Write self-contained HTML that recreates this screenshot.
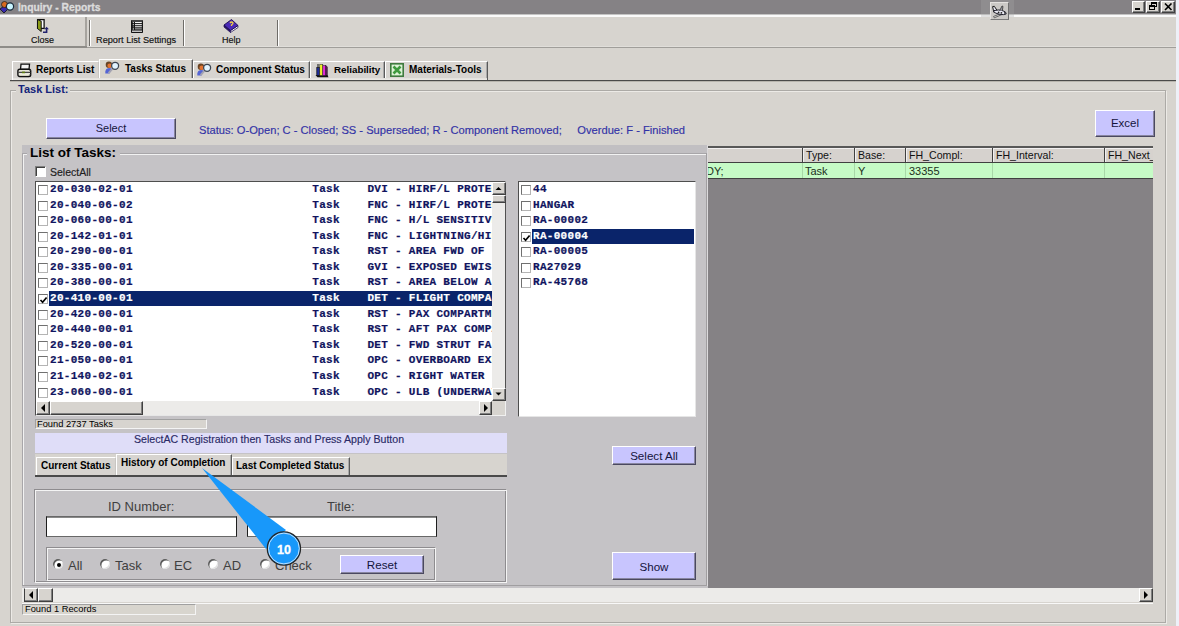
<!DOCTYPE html>
<html><head><meta charset="utf-8">
<style>
*{box-sizing:border-box;margin:0;padding:0}
html,body{width:1179px;height:626px;overflow:hidden;background:#D7D4CF;font-family:"Liberation Sans",sans-serif;position:relative}
.a{position:absolute}
.t{position:absolute;white-space:pre;line-height:1;-webkit-text-stroke:0.15px currentColor}
.mono{font-family:"Liberation Mono",monospace;font-weight:bold}
.raised{border-top:1px solid #fff;border-left:1px solid #fff;border-right:1px solid #404040;border-bottom:1px solid #404040;box-shadow:inset -1px -1px 0 #808080}
.sunk{border-top:1px solid #808080;border-left:1px solid #808080;border-right:1px solid #fff;border-bottom:1px solid #fff;box-shadow:inset 1px 1px 0 #404040}
.btn{position:absolute;background:#C8C5FE;border-top:1px solid #fff;border-left:1px solid #fff;border-right:1px solid #4A4860;border-bottom:1px solid #4A4860;box-shadow:inset -1px -1px 0 #8886A0;color:#14143C;text-align:center;white-space:pre}
.cb{position:absolute;width:10px;height:10px;background:#fff;border-top:1px solid #707070;border-left:1px solid #707070;border-right:1px solid #B4B4B4;border-bottom:1px solid #B4B4B4}
.tab{position:absolute;background:#D7D4D0;border-top:1px solid #fff;border-left:1px solid #fff;border-right:1px solid #5A5A5A;box-shadow:inset -1px 0 0 #A8A8A8;font-weight:bold;font-size:10px;white-space:pre}
.track{position:absolute;background:#ECEBE9}
.sbtn{position:absolute;background:#D7D4CF;border-top:1px solid #fff;border-left:1px solid #fff;border-right:1px solid #404040;border-bottom:1px solid #404040;box-shadow:inset -1px -1px 0 #808080}
.row{position:absolute;height:15px;white-space:pre;font-size:11px;letter-spacing:0.3px;line-height:15px;color:#10145E;-webkit-text-stroke:0.2px currentColor}
.sel{background:#0A246A;color:#fff}
.radio{position:absolute;width:10px;height:10px;border-radius:50%;background:#fff;box-shadow:inset 1.4px 1.4px 0 #5A5A5A, inset -1px -1px 0 #E0E0E0}
</style></head><body>

<!-- right light strip -->
<div class="a" style="left:1176px;top:0;width:3px;height:626px;background:#EEF0F8"></div>

<!-- title bar -->
<div class="a" style="left:0;top:0;width:1176px;height:14px;background:#858285"></div>
<svg class="a" style="left:0;top:0" width="16" height="14" viewBox="0 0 16 14">
  <path d="M0 9 L4 6 L8 9 L4 13 Z" fill="#3A2AB0" stroke="#111" stroke-width="0.8"/>
  <circle cx="4.5" cy="4.5" r="3" fill="#D86A20" stroke="#222" stroke-width="0.8"/>
  <circle cx="10" cy="6.5" r="3.6" fill="#C8F4FF" stroke="#1A2A3A" stroke-width="1.2"/>
</svg>
<div class="t" style="left:18px;top:3px;font-size:10.3px;font-weight:bold;color:#DCDCDC;-webkit-text-stroke:0.3px #DCDCDC">Inquiry - Reports</div>

<!-- window buttons -->
<div class="a raised" style="left:1132px;top:1px;width:13px;height:12px;background:#D7D4CF"></div>
<div class="a" style="left:1135px;top:8px;width:5px;height:2px;background:#000"></div>
<div class="a raised" style="left:1146px;top:1px;width:14px;height:12px;background:#D7D4CF"></div>
<svg class="a" style="left:1148px;top:2px" width="10" height="9" viewBox="0 0 10 9">
  <rect x="3.5" y="0.5" width="5" height="4" fill="none" stroke="#000"/><rect x="3" y="0" width="6" height="2" fill="#000"/>
  <rect x="1.5" y="3.5" width="5" height="4" fill="#D7D4CF" stroke="#000"/><rect x="1" y="3" width="6" height="2" fill="#000"/>
</svg>
<div class="a raised" style="left:1161px;top:1px;width:14px;height:12px;background:#D7D4CF"></div>
<svg class="a" style="left:1164px;top:3px" width="9" height="8" viewBox="0 0 9 8">
  <path d="M1 0.5 L7.5 7 M7.5 0.5 L1 7" stroke="#000" stroke-width="1.6"/>
</svg>

<!-- toolbar -->
<div class="a" style="left:0;top:14px;width:1176px;height:1px;background:#C4C4C4"></div>
<div class="a" style="left:0;top:15px;width:1176px;height:2px;background:#FAFAFA"></div>
<div class="a" style="left:0;top:46px;width:1176px;height:1px;background:#E0DEDA"></div>
<div class="a" style="left:0;top:47px;width:1176px;height:1px;background:#A09E9A"></div>
<div class="a" style="left:85px;top:17px;width:2px;height:30px;background:#A6A39E"></div>
<div class="a" style="left:0;top:46px;width:87px;height:2px;background:#8E8C88"></div>
<div class="a" style="left:89px;top:20px;width:1px;height:26px;background:#6E6C68"></div>
<div class="a" style="left:90px;top:20px;width:1px;height:26px;background:#fff"></div>
<div class="a" style="left:183px;top:20px;width:1px;height:26px;background:#6E6C68"></div>
<div class="a" style="left:184px;top:20px;width:1px;height:26px;background:#fff"></div>
<div class="a" style="left:277px;top:20px;width:1px;height:26px;background:#6E6C68"></div>
<div class="a" style="left:278px;top:20px;width:1px;height:26px;background:#fff"></div>

<!-- plane button -->
<div class="a" style="left:981px;top:0;width:33px;height:17px;background:rgba(168,168,168,0.3)"></div>
<div class="a" style="left:990px;top:2px;width:19px;height:18px;background:#CBC9C6;border-top:1px solid #E4E2E0;border-left:1px solid #E4E2E0;border-right:1px solid #6E6E6E;border-bottom:1px solid #7A7A7A"></div>
<svg class="a" style="left:990px;top:2px" width="19" height="18" viewBox="0 0 19 18">
  <path d="M9.5 12 L3.5 14.5 L4.3 15.8 L12 12.5 Z" fill="#E4E4E4" stroke="#555" stroke-width="0.9"/>
  <path d="M2.6 4.6 L4.3 4.3 L7.5 9 L3.8 10.2 Z" fill="#E8E8F2" stroke="#1A1A1A" stroke-width="1"/>
  <path d="M3.8 8.6 Q9 7.2 13 8.8 Q16.6 10 16.2 12 Q14 13.2 9 12.2 Q5.2 11.2 3.8 9.8 Z" fill="#ECECF6" stroke="#1E1E2A" stroke-width="1"/>
  <path d="M9.8 8.4 L12 4 L13 4.4 L12.3 9" fill="#9A9AA2" stroke="#333" stroke-width="0.8"/>
  <circle cx="8.6" cy="10.4" r="0.9" fill="#222"/><circle cx="11.4" cy="10.8" r="0.9" fill="#222"/><path d="M14.6 9.8 L15 12" stroke="#222" stroke-width="1"/>
</svg>

<!-- close icon -->
<svg class="a" style="left:36px;top:18px" width="14" height="16" viewBox="0 0 14 16">
  <rect x="1.6" y="1.6" width="6.5" height="8.8" fill="#fff" stroke="#111" stroke-width="1.3"/>
  <path d="M1.5 1.5 L5.2 3.2 L5.2 13.5 L1.5 10.5 Z" fill="#8C9C18" stroke="#111" stroke-width="1"/>
  <path d="M7 14.3 H10.6 V10.6" stroke="#22226E" stroke-width="1.6" fill="none"/>
  <path d="M8.3 11.3 L10.6 8.8 L12.9 11.3 Z" fill="#22226E"/>
</svg>
<div class="t" style="left:31px;top:36px;font-size:9px;color:#101010">Close</div>
<!-- report list settings icon -->
<svg class="a" style="left:131px;top:20px" width="12" height="13" viewBox="0 0 12 13">
  <rect x="0" y="0" width="12" height="13" rx="0.8" fill="#141414"/>
  <rect x="1" y="0.6" width="10.2" height="0.8" fill="#8A8A8A"/>
  <rect x="4" y="2" width="6.8" height="1.1" fill="#F4F4F4"/>
  <rect x="4" y="4.1" width="6.8" height="1.1" fill="#F4F4F4"/>
  <rect x="4" y="6.2" width="6.8" height="1.1" fill="#E8E8E8"/>
  <rect x="4" y="8.3" width="6.8" height="1.1" fill="#A8A8A8"/>
  <rect x="1" y="10.6" width="10" height="1.2" fill="#F0F0F0"/>
  <circle cx="2.3" cy="2.6" r="0.65" fill="#fff"/><circle cx="2.3" cy="4.7" r="0.65" fill="#ddd"/><circle cx="2.3" cy="6.8" r="0.65" fill="#999"/><circle cx="2.3" cy="8.9" r="0.65" fill="#fff"/>
</svg>
<div class="t" style="left:96px;top:36px;font-size:9.2px;color:#101010">Report List Settings</div>
<!-- help icon -->
<svg class="a" style="left:222px;top:18px" width="18" height="16" viewBox="0 0 18 16">
  <path d="M2 7 L2 9 L8.5 14.5 L8.5 12.5 Z" fill="#2A1470" stroke="#1A0A50" stroke-width="0.7"/>
  <path d="M8.5 12.5 L16 7.5 L16 9.5 L8.5 14.5 Z" fill="#F4F4F4" stroke="#1A0A50" stroke-width="0.7"/>
  <path d="M2 7 L9.5 1.5 L16 7.5 L8.5 12.5 Z" fill="#4A2AB8" stroke="#1A0A50" stroke-width="0.9"/>
  <path d="M8 5 Q9.5 3 11 5 Q11 6 9.5 7 L9.5 8" stroke="#F0D040" stroke-width="1.3" fill="none"/>
</svg>
<div class="t" style="left:222px;top:36px;font-size:9px;color:#101010">Help</div>

<!-- tab strip -->
<div class="a" style="left:10px;top:80px;width:1166px;height:1px;background:#4A4A4A"></div>
<div class="a" style="left:10px;top:81px;width:1166px;height:1px;background:#B8B5AE"></div>
<div class="tab" style="left:12px;top:61px;width:87px;height:19px;border-right-color:#C8C6C2;box-shadow:none"></div>
<svg class="a" style="left:17px;top:63px" width="15" height="15" viewBox="0 0 15 15">
  <path d="M4 1.2 L12.5 1.2 L12 6.5 L3.5 6.5 Z" fill="#F2F2F2" stroke="#111" stroke-width="1.3"/>
  <rect x="0.9" y="6.3" width="12.8" height="7.2" rx="1.8" fill="#E6E6DA" stroke="#111" stroke-width="1.4"/>
  <path d="M1.5 9.3 H13" stroke="#222" stroke-width="1"/>
  <rect x="5" y="8.6" width="3" height="1.6" fill="#5A7A10"/>
  <rect x="3" y="11.3" width="8.5" height="1.2" fill="#F0F0D8"/>
  <path d="M13.2 7 V12" stroke="#333" stroke-width="1" stroke-dasharray="1 1"/>
</svg>
<div class="t" style="left:36px;top:65px;font-size:10px;font-weight:bold;color:#000;-webkit-text-stroke:0">Reports List</div>

<div class="tab" style="left:99px;top:59px;width:94px;height:21px;background:#D8D4CC"></div>
<svg class="a" style="left:104px;top:61px" width="16" height="15" viewBox="0 0 16 15">
  <path d="M1.3 12.5 Q0.8 7.2 5 7 L7.8 7.6 L5.5 12.5 Z" fill="#5464D4"/>
  <circle cx="4.9" cy="3.7" r="3.2" fill="#6A4424"/>
  <circle cx="5.6" cy="4.8" r="2.2" fill="#E27432"/>
  
  <path d="M8.6 7.6 L4.6 12.2" stroke="#A4A4B2" stroke-width="1.9"/>
  <circle cx="11.1" cy="4.8" r="3.5" fill="#E2F4FF" stroke="#3E4652" stroke-width="1.3"/>
</svg>
<div class="t" style="left:125px;top:64px;font-size:10px;font-weight:bold;color:#000;-webkit-text-stroke:0">Tasks Status</div>

<div class="tab" style="left:193px;top:61px;width:117px;height:19px;"></div>
<svg class="a" style="left:196px;top:63px" width="16" height="15" viewBox="0 0 16 15">
  <path d="M1.3 12.5 Q0.8 7.2 5 7 L7.8 7.6 L5.5 12.5 Z" fill="#5464D4"/>
  <circle cx="4.9" cy="3.7" r="3.2" fill="#6A4424"/>
  <circle cx="5.6" cy="4.8" r="2.2" fill="#E27432"/>
  
  <path d="M8.6 7.6 L4.6 12.2" stroke="#A4A4B2" stroke-width="1.9"/>
  <circle cx="11.1" cy="4.8" r="3.5" fill="#E2F4FF" stroke="#3E4652" stroke-width="1.3"/>
</svg>
<div class="t" style="left:216px;top:65px;font-size:10px;font-weight:bold;color:#000;-webkit-text-stroke:0">Component Status</div>

<div class="tab" style="left:310px;top:61px;width:75px;height:19px;"></div>
<svg class="a" style="left:315px;top:63px" width="14" height="15" viewBox="0 0 14 15">
  <path d="M0.5 12 L2.5 14.2 L13.5 14.2 L12.5 12 Z" fill="#111"/>
  <rect x="1.8" y="4.5" width="3" height="8" fill="#1E2C9C" stroke="#111" stroke-width="0.7"/>
  <rect x="4.8" y="1.5" width="3" height="11" fill="#F2F02A" stroke="#222" stroke-width="0.5"/>
  <rect x="7.8" y="2.5" width="3" height="10" fill="#E22AD8" stroke="#222" stroke-width="0.5"/>
  <path d="M10.8 2.5 L12.3 4 L12.3 12.5 L10.8 12.5 Z" fill="#7A1A70" stroke="#111" stroke-width="0.6"/>
  <path d="M3 1 V4.5" stroke="#111" stroke-width="1"/>
</svg>
<div class="t" style="left:334px;top:65px;font-size:9.8px;font-weight:bold;color:#000;-webkit-text-stroke:0">Reliability</div>

<div class="tab" style="left:385px;top:61px;width:103px;height:19px;"></div>
<svg class="a" style="left:390px;top:63px" width="14" height="14" viewBox="0 0 14 14">
  <rect x="0.8" y="0.8" width="12.4" height="12.4" fill="#DDF2D6" stroke="#3F7A3F" stroke-width="1.6"/>
  <path d="M3.5 3.5 L10.5 10.5 M10.5 3.5 L3.5 10.5" stroke="#3E9A3E" stroke-width="2.6"/>
</svg>
<div class="t" style="left:409px;top:65px;font-size:10px;font-weight:bold;color:#000;-webkit-text-stroke:0">Materials-Tools</div>

<div class="a" style="left:13px;top:78px;width:474px;height:2px;background:linear-gradient(#E2E0DC,#ECEAE6)"></div>
<!-- Task List group box -->
<div class="a" style="left:10px;top:90px;width:1156px;height:533px;border:1px solid #ACAAA6;box-shadow:inset 1px 1px 0 #ECEAE6, 1px 1px 0 #ECEAE6"></div>
<div class="a" style="left:16px;top:84px;width:54px;height:12px;background:#D7D4CF"></div>
<div class="t" style="left:18px;top:84px;font-size:11px;font-weight:bold;color:#14237A;-webkit-text-stroke:0">Task List:</div>

<div class="btn" style="left:46px;top:118px;width:130px;height:21px;font-size:11px;line-height:19px">Select</div>
<div class="t" style="left:199px;top:125px;font-size:11.15px;color:#3232A6">Status: O-Open; C - Closed; SS - Superseded; R - Component Removed;     Overdue: F - Finished</div>
<div class="btn" style="left:1095px;top:110px;width:60px;height:27px;font-size:11.5px;line-height:25px">Excel</div>

<!-- grid -->
<div class="a" style="left:708px;top:146px;width:445px;height:442px;background:#858285"></div>
<div class="a" style="left:708px;top:146px;width:445px;height:2px;background:#585858"></div>
<div class="a" style="left:708px;top:148px;width:445px;height:14px;background:#D6D2CE;border-top:1px solid #F2F0F0"></div>
<div class="a" style="left:708px;top:162px;width:445px;height:1px;background:#404040"></div>
<div class="a" style="left:708px;top:163px;width:445px;height:15px;background:#C6FBC6"></div>
<div class="a" style="left:708px;top:178px;width:445px;height:1px;background:#404040"></div>
<div class="a" style="left:802px;top:148px;width:1px;height:14px;background:#404040"></div>
<div class="a" style="left:803px;top:148px;width:1px;height:14px;background:#F2F0F0"></div>
<div class="a" style="left:802px;top:163px;width:1px;height:15px;background:#A8D8A8"></div>
<div class="a" style="left:854px;top:148px;width:1px;height:14px;background:#404040"></div>
<div class="a" style="left:855px;top:148px;width:1px;height:14px;background:#F2F0F0"></div>
<div class="a" style="left:854px;top:163px;width:1px;height:15px;background:#A8D8A8"></div>
<div class="a" style="left:905px;top:148px;width:1px;height:14px;background:#404040"></div>
<div class="a" style="left:906px;top:148px;width:1px;height:14px;background:#F2F0F0"></div>
<div class="a" style="left:905px;top:163px;width:1px;height:15px;background:#A8D8A8"></div>
<div class="a" style="left:992px;top:148px;width:1px;height:14px;background:#404040"></div>
<div class="a" style="left:993px;top:148px;width:1px;height:14px;background:#F2F0F0"></div>
<div class="a" style="left:992px;top:163px;width:1px;height:15px;background:#A8D8A8"></div>
<div class="a" style="left:1104px;top:148px;width:1px;height:14px;background:#404040"></div>
<div class="a" style="left:1105px;top:148px;width:1px;height:14px;background:#F2F0F0"></div>
<div class="a" style="left:1104px;top:163px;width:1px;height:15px;background:#A8D8A8"></div>
<div class="t" style="left:806px;top:150px;font-size:10.6px;color:#101010;-webkit-text-stroke:0">Type:</div>
<div class="t" style="left:858px;top:150px;font-size:10.6px;color:#101010;-webkit-text-stroke:0">Base:</div>
<div class="t" style="left:909px;top:150px;font-size:10.6px;color:#101010;-webkit-text-stroke:0">FH_Compl:</div>
<div class="t" style="left:996px;top:150px;font-size:10.6px;color:#101010;-webkit-text-stroke:0">FH_Interval:</div>
<div class="a" style="left:1105px;top:147px;width:48px;height:15px;overflow:hidden"><div class="t" style="left:3px;top:3px;font-size:10.6px;color:#101010;-webkit-text-stroke:0">FH_Next_</div></div>
<div class="a" style="left:708px;top:163px;width:94px;height:15px;overflow:hidden"><div class="t" style="left:-2px;top:3px;font-size:11px;color:#203020;-webkit-text-stroke:0">DY;</div></div>
<div class="t" style="left:805px;top:166px;font-size:11px;color:#203020;-webkit-text-stroke:0">Task</div>
<div class="t" style="left:858px;top:166px;font-size:11px;color:#203020;-webkit-text-stroke:0">Y</div>
<div class="t" style="left:909px;top:166px;font-size:11px;color:#203020;-webkit-text-stroke:0">33355</div>
<div class="track" style="left:707px;top:588px;width:446px;height:14px"></div>
<div class="sbtn" style="left:1139px;top:588px;width:14px;height:14px"></div>
<svg class="a" style="left:1143px;top:591px" width="6" height="8"><path d="M1 0 L5 4 L1 8 Z" fill="#000"/></svg>

<!-- List of Tasks panel -->
<div class="a" style="left:22px;top:145px;width:686px;height:441px;background:#C5C3C6"></div>
<div class="a" style="left:22px;top:145px;width:686px;height:8px;background:#C1BFC2"></div>
<div class="a" style="left:22px;top:153px;width:685px;height:1px;background:#A8A6A9"></div>
<div class="a" style="left:23px;top:154px;width:683px;height:1px;background:#F2F2F2"></div>
<div class="a" style="left:22px;top:153px;width:1px;height:433px;background:#A8A6A9"></div>
<div class="a" style="left:23px;top:154px;width:1px;height:431px;background:#F2F2F2"></div>
<div class="a" style="left:706px;top:153px;width:1px;height:433px;background:#A09EA0"></div>
<div class="a" style="left:707px;top:145px;width:1px;height:442px;background:#DCDADC"></div>
<div class="a" style="left:22px;top:585px;width:685px;height:1px;background:#A09EA0"></div>
<div class="a" style="left:27px;top:153px;width:93px;height:2px;background:#C4C2C5"></div>
<div class="t" style="left:30px;top:146px;font-size:13.5px;font-weight:bold;color:#000;-webkit-text-stroke:0">List of Tasks:</div>

<div class="a" style="left:35px;top:166px;width:11px;height:11px;background:#fff;border-top:1px solid #808080;border-left:1px solid #808080;border-right:1px solid #fff;border-bottom:1px solid #fff;box-shadow:inset 1px 1px 0 #404040"></div>
<div class="t" style="left:50px;top:167px;font-size:10.5px;color:#202020">SelectAll</div>

<!-- left listbox -->
<div class="a" style="left:35px;top:181px;width:471px;height:235px;background:#fff;border-top:1px solid #4E4E4E;border-left:1px solid #4E4E4E;border-right:1px solid #E6E6E6;border-bottom:1px solid #E6E6E6"></div>
<div id="L" class="a" style="left:37px;top:183px;width:455px;height:218px;overflow:hidden"><div class="cb" style="left:1px;top:2.00px"></div>
<div class="row mono" style="left:12px;top:-1.00px;width:460px;padding-left:1px">20-030-02-01                          Task    DVI - HIRF/L PROTECTION</div>
<div class="cb" style="left:1px;top:17.58px"></div>
<div class="row mono" style="left:12px;top:14.58px;width:460px;padding-left:1px">20-040-06-02                          Task    FNC - HIRF/L PROTECTION</div>
<div class="cb" style="left:1px;top:33.16px"></div>
<div class="row mono" style="left:12px;top:30.16px;width:460px;padding-left:1px">20-060-00-01                          Task    FNC - H/L SENSITIVE</div>
<div class="cb" style="left:1px;top:48.74px"></div>
<div class="row mono" style="left:12px;top:45.74px;width:460px;padding-left:1px">20-142-01-01                          Task    FNC - LIGHTNING/HIRF</div>
<div class="cb" style="left:1px;top:64.32px"></div>
<div class="row mono" style="left:12px;top:61.32px;width:460px;padding-left:1px">20-290-00-01                          Task    RST - AREA FWD OF</div>
<div class="cb" style="left:1px;top:79.90px"></div>
<div class="row mono" style="left:12px;top:76.90px;width:460px;padding-left:1px">20-335-00-01                          Task    GVI - EXPOSED EWIS</div>
<div class="cb" style="left:1px;top:95.48px"></div>
<div class="row mono" style="left:12px;top:92.48px;width:460px;padding-left:1px">20-380-00-01                          Task    RST - AREA BELOW A</div>
<div class="cb" style="left:1px;top:111.06px"></div>
<svg class="a" style="left:2px;top:113.06px" width="9" height="8"><path d="M1.5 4 L3.6 6.3 L7.6 1.5" stroke="#000" stroke-width="1.7" fill="none"/></svg>
<div class="row mono sel" style="left:12px;top:108.06px;width:460px;padding-left:1px">20-410-00-01                          Task    DET - FLIGHT COMPARTMENT</div>
<div class="cb" style="left:1px;top:126.64px"></div>
<div class="row mono" style="left:12px;top:123.64px;width:460px;padding-left:1px">20-420-00-01                          Task    RST - PAX COMPARTMENT</div>
<div class="cb" style="left:1px;top:142.22px"></div>
<div class="row mono" style="left:12px;top:139.22px;width:460px;padding-left:1px">20-440-00-01                          Task    RST - AFT PAX COMPART</div>
<div class="cb" style="left:1px;top:157.80px"></div>
<div class="row mono" style="left:12px;top:154.80px;width:460px;padding-left:1px">20-520-00-01                          Task    DET - FWD STRUT FAIRING</div>
<div class="cb" style="left:1px;top:173.38px"></div>
<div class="row mono" style="left:12px;top:170.38px;width:460px;padding-left:1px">21-050-00-01                          Task    OPC - OVERBOARD EXHAUST</div>
<div class="cb" style="left:1px;top:188.96px"></div>
<div class="row mono" style="left:12px;top:185.96px;width:460px;padding-left:1px">21-140-02-01                          Task    OPC - RIGHT WATER</div>
<div class="cb" style="left:1px;top:204.54px"></div>
<div class="row mono" style="left:12px;top:201.54px;width:460px;padding-left:1px">23-060-00-01                          Task    OPC - ULB (UNDERWATER</div></div>
<!-- vscroll -->
<div class="track" style="left:492px;top:182px;width:14px;height:219px;border-right:1px solid #505050"></div>
<div class="sbtn" style="left:492px;top:182px;width:14px;height:13px"></div>
<svg class="a" style="left:495px;top:186px" width="7" height="5"><path d="M0.5 4 L3.5 1 L6.5 4 Z" fill="#000"/></svg>
<div class="sbtn" style="left:492px;top:195px;width:14px;height:8px"></div>
<div class="sbtn" style="left:492px;top:388px;width:14px;height:13px"></div>
<svg class="a" style="left:495px;top:392px" width="7" height="5"><path d="M0.5 0.5 L6.5 0.5 L3.5 3.5 Z" fill="#000"/></svg>
<!-- hscroll -->
<div class="track" style="left:36px;top:401px;width:456px;height:14px"></div>
<div class="sbtn" style="left:36px;top:401px;width:14px;height:14px"></div>
<svg class="a" style="left:40px;top:404px" width="6" height="8"><path d="M5 0 L1 4 L5 8 Z" fill="#000"/></svg>
<div class="sbtn" style="left:50px;top:401px;width:93px;height:14px"></div>
<div class="sbtn" style="left:479px;top:401px;width:13px;height:14px"></div>
<svg class="a" style="left:483px;top:404px" width="6" height="8"><path d="M1 0 L5 4 L1 8 Z" fill="#000"/></svg>
<div class="a" style="left:492px;top:401px;width:14px;height:15px;background:#D7D4CF;border-right:1px solid #F0F0F0;border-bottom:1px solid #F0F0F0"></div>

<!-- found tasks -->
<div class="a" style="left:35px;top:419px;width:172px;height:10px;background:#D7D4CF;border-top:1px solid #A0A0A0;border-left:1px solid #A0A0A0;border-bottom:1px solid #F4F4F4;border-right:1px solid #F4F4F4"></div>
<div class="t" style="left:37px;top:420px;font-size:9.3px;color:#000;-webkit-text-stroke:0">Found 2737 Tasks</div>

<!-- right listbox -->
<div class="a" style="left:518px;top:181px;width:178px;height:236px;background:#fff;border-top:1px solid #4E4E4E;border-left:1px solid #4E4E4E;border-right:1px solid #E6E6E6;border-bottom:1px solid #E6E6E6"></div>
<div id="R" class="a" style="left:520px;top:183px;width:174px;height:232px;overflow:hidden"><div class="cb" style="left:1px;top:2.00px"></div>
<div class="row mono" style="left:12px;top:-1.00px;width:162px;padding-left:1px">44</div>
<div class="cb" style="left:1px;top:17.58px"></div>
<div class="row mono" style="left:12px;top:14.58px;width:162px;padding-left:1px">HANGAR</div>
<div class="cb" style="left:1px;top:33.16px"></div>
<div class="row mono" style="left:12px;top:30.16px;width:162px;padding-left:1px">RA-00002</div>
<div class="cb" style="left:1px;top:48.74px"></div>
<svg class="a" style="left:2px;top:50.74px" width="9" height="8"><path d="M1.5 4 L3.6 6.3 L7.6 1.5" stroke="#000" stroke-width="1.7" fill="none"/></svg>
<div class="row mono sel" style="left:12px;top:45.74px;width:162px;padding-left:1px">RA-00004</div>
<div class="cb" style="left:1px;top:64.32px"></div>
<div class="row mono" style="left:12px;top:61.32px;width:162px;padding-left:1px">RA-00005</div>
<div class="cb" style="left:1px;top:79.90px"></div>
<div class="row mono" style="left:12px;top:76.90px;width:162px;padding-left:1px">RA27029</div>
<div class="cb" style="left:1px;top:95.48px"></div>
<div class="row mono" style="left:12px;top:92.48px;width:162px;padding-left:1px">RA-45768</div></div>

<!-- label bar -->
<div class="a" style="left:35px;top:433px;width:472px;height:20px;background:#DFDDF8"></div>
<div class="t" style="left:134px;top:434px;font-size:10.6px;color:#2A2A66">SelectAC Registration then Tasks and Press Apply Button</div>

<!-- lower tab strip -->
<div class="a" style="left:35px;top:454px;width:472px;height:22px;background:#D7D4CF"></div>
<div class="a" style="left:35px;top:475px;width:472px;height:2px;background:#4A4A4A"></div>
<div class="tab" style="left:36px;top:457px;width:80px;height:18px;border-right-color:#C8C6C2;box-shadow:none"></div>
<div class="t" style="left:41px;top:461px;font-size:10px;font-weight:bold;color:#000;-webkit-text-stroke:0">Current Status</div>
<div class="tab" style="left:116px;top:454px;width:116px;height:21px;"></div>
<div class="t" style="left:121px;top:458px;font-size:10px;font-weight:bold;color:#000;-webkit-text-stroke:0">History of Completion</div>
<div class="tab" style="left:232px;top:457px;width:118px;height:18px;"></div>
<div class="t" style="left:236px;top:461px;font-size:10px;font-weight:bold;color:#000;-webkit-text-stroke:0">Last Completed Status</div>

<!-- Select All / Show buttons -->
<div class="btn" style="left:612px;top:446px;width:84px;height:19px;font-size:11.6px;line-height:18px">Select All</div>
<div class="btn" style="left:612px;top:552px;width:84px;height:28px;font-size:11.6px;line-height:27px">Show</div>

<!-- ID group -->
<div class="a" style="left:34px;top:489px;width:473px;height:94px;border-top:1px solid #8E8C8F;border-left:1px solid #8E8C8F;border-right:1px solid #F4F4F4;border-bottom:1px solid #F4F4F4;box-shadow:inset 1px 1px 0 #F4F4F4, inset -1px -1px 0 #8E8C8F"></div>
<div class="t" style="left:108px;top:500px;font-size:13px;color:#404040;-webkit-text-stroke:0">ID Number:</div>
<div class="t" style="left:327px;top:500px;font-size:13px;color:#404040;-webkit-text-stroke:0">Title:</div>
<div class="a" style="left:46px;top:516px;width:191px;height:21px;background:#fff;border-top:1px solid #686868;border-left:1px solid #1E1E1E;border-right:1px solid #1E1E1E;border-bottom:1px solid #686868;box-shadow:inset 0 1px 0 #8A8A8A"></div>
<div class="a" style="left:247px;top:516px;width:190px;height:21px;background:#fff;border-top:1px solid #686868;border-left:1px solid #1E1E1E;border-right:1px solid #1E1E1E;border-bottom:1px solid #686868;box-shadow:inset 0 1px 0 #8A8A8A"></div>

<div class="a" style="left:46px;top:547px;width:390px;height:34px;border-top:1px solid #8E8C8F;border-left:1px solid #8E8C8F;border-right:1px solid #F4F4F4;border-bottom:1px solid #F4F4F4;box-shadow:inset 1px 1px 0 #F4F4F4, inset -1px -1px 0 #8E8C8F"></div>
<div class="radio" style="left:53px;top:559px"></div>
<div class="a" style="left:56.5px;top:562.5px;width:4px;height:4px;background:#000;border-radius:50%"></div>
<div class="t" style="left:68px;top:559px;font-size:13px;color:#404040;-webkit-text-stroke:0">All</div>
<div class="radio" style="left:100px;top:559px"></div>
<div class="t" style="left:115px;top:559px;font-size:13px;color:#404040;-webkit-text-stroke:0">Task</div>
<div class="radio" style="left:160px;top:559px"></div>
<div class="t" style="left:174px;top:559px;font-size:13px;color:#404040;-webkit-text-stroke:0">EC</div>
<div class="radio" style="left:208px;top:559px"></div>
<div class="t" style="left:223px;top:559px;font-size:13px;color:#404040;-webkit-text-stroke:0">AD</div>
<div class="radio" style="left:260px;top:559px"></div>
<div class="t" style="left:275px;top:559px;font-size:13px;color:#404040;-webkit-text-stroke:0">Check</div>
<div class="btn" style="left:340px;top:555px;width:84px;height:19px;font-size:11.6px;line-height:18px">Reset</div>

<!-- bottom scrollbar -->
<div class="a" style="left:22px;top:586px;width:686px;height:2px;background:#C5C3C6"></div>
<div class="track" style="left:22px;top:588px;width:686px;height:14px"></div>
<div class="sbtn" style="left:24px;top:588px;width:14px;height:14px;border-left-color:#404040"></div>
<svg class="a" style="left:28px;top:591px" width="6" height="8"><path d="M5 0 L1 4 L5 8 Z" fill="#000"/></svg>
<div class="sbtn" style="left:38px;top:588px;width:15px;height:14px"></div>
<div class="a" style="left:22px;top:603px;width:1131px;height:1px;background:#F8F8F8"></div>
<div class="a" style="left:22px;top:604px;width:174px;height:11px;background:#D8D5CE;border-top:1px solid #A0A0A0;border-left:1px solid #A0A0A0;border-bottom:1px solid #F4F4F4;border-right:1px solid #F4F4F4"></div>
<div class="t" style="left:25px;top:605px;font-size:9.3px;color:#000;-webkit-text-stroke:0">Found 1 Records</div>

<!-- callout -->
<svg class="a" style="left:195px;top:462px" width="110" height="110" viewBox="195 462 110 110">
  <path d="M202 468 L266 549 L286 530 Z" fill="#1898FA"/>
  <circle cx="283.9" cy="548.5" r="16.6" fill="#1898FA" stroke="#262626" stroke-width="1.3"/>
  <circle cx="283.9" cy="548.5" r="15.4" fill="none" stroke="#E8F4FF" stroke-width="0.8"/>
  <text x="283.9" y="553.8" font-family="Liberation Sans" font-weight="bold" font-size="12.5" fill="#fff" stroke="#fff" stroke-width="0.3" text-anchor="middle">10</text>
</svg>


</body></html>
